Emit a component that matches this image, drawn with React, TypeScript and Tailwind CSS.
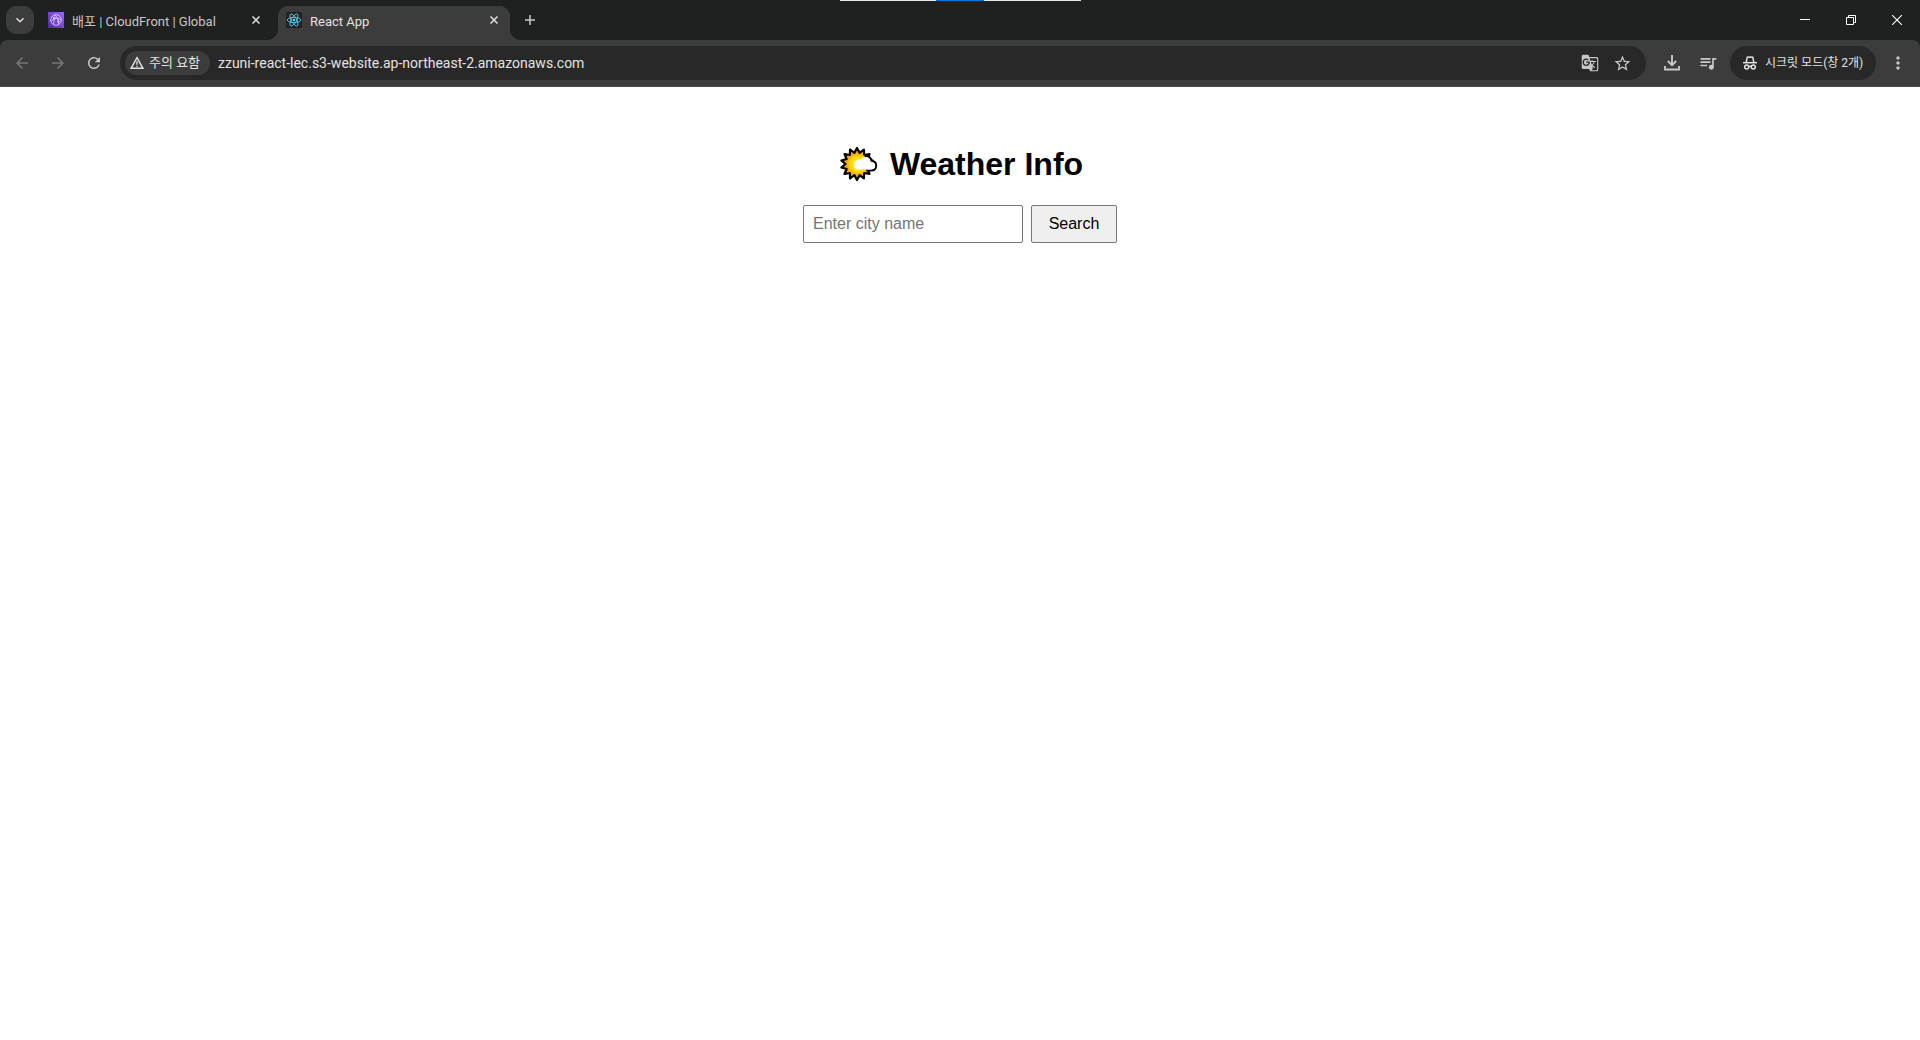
import React from 'react';
import {
  MdArrowBack,
  MdArrowForward,
  MdExpandMore,
  MdGTranslate,
  MdMoreVert,
  MdQueueMusic,
  MdRefresh,
  MdStarBorder,
} from 'react-icons/md';

const UI_FONT = "font-[Roboto,'Noto_Sans_CJK_KR',sans-serif]";

const CloudFrontIcon = () => (
  <svg viewBox="0 0 16 16" className="size-4 shrink-0" aria-hidden="true">
    <defs>
      <linearGradient id="cloudfront" x1="0" y1="1" x2="1" y2="0">
        <stop offset="0" stopColor="#4d27aa" />
        <stop offset="1" stopColor="#a166ff" />
      </linearGradient>
    </defs>
    <rect width="16" height="16" fill="url(#cloudfront)" />
    <g fill="none" stroke="#e6dcfa" strokeWidth="0.8">
      <circle cx="8" cy="8" r="5.300" />
      <path d="M4 4.500C6 5 6.500 8 5.500 12.500M6.500 3C9.500 4.500 11 8 10.500 12.800M3 9.500C6 6 10 5.500 13 8" />
      <circle cx="6.500" cy="6" r="0.800" />
      <circle cx="10.300" cy="9.500" r="0.800" />
    </g>
  </svg>
);

const ReactIcon = () => (
  <svg viewBox="0 0 16 16" className="size-4 shrink-0" aria-hidden="true">
    <rect width="16" height="16" rx="1.500" fill="#222222" />
    <g fill="none" stroke="#61dafb" strokeWidth="0.8">
      <ellipse cx="8" cy="8" rx="6.800" ry="2.600" />
      <ellipse cx="8" cy="8" rx="6.800" ry="2.600" transform="rotate(60 8 8)" />
      <ellipse cx="8" cy="8" rx="6.800" ry="2.600" transform="rotate(120 8 8)" />
    </g>
    <circle cx="8" cy="8" r="1.300" fill="#61dafb" />
  </svg>
);

const CloseIcon = () => (
  <svg viewBox="0 0 8 8" className="size-2" stroke="currentColor" strokeWidth="1.500" aria-hidden="true">
    <path d="M0.500 0.500L7.500 7.500M7.500 0.500L0.500 7.500" />
  </svg>
);

const WarningIcon = () => (
  <svg viewBox="0 0 14 14" className="size-3.5 shrink-0" aria-hidden="true">
    <path d="M7 1.700L12.900 12.300H1.100Z" fill="none" stroke="#e3e3e3" strokeWidth="1.400" />
    <path d="M7 5.200V8.800M7 9.700V11" stroke="#e3e3e3" strokeWidth="1.300" />
  </svg>
);

const DownloadIcon = () => (
  <svg viewBox="0 0 16 16" className="size-4" fill="none" stroke="#c7c7c7" strokeWidth="1.900" aria-hidden="true">
    <path d="M8 0V10M3.800 6L8 10.200L12.200 6M1 11V14.500H15V11" />
  </svg>
);

const IncognitoIcon = () => (
  <svg viewBox="0 0 14 14" className="size-3.5 shrink-0" aria-hidden="true">
    <g fill="none" stroke="#e3e3e3" strokeWidth="1.500">
      <path d="M3.200 6.300L4.200 1.200Q5.500 0.700 7 1.300Q8.500 0.700 9.800 1.200L10.800 6.300" />
      <path d="M0 6.700H14" />
      <circle cx="3.700" cy="11" r="2" />
      <circle cx="10.300" cy="11" r="2" />
      <path d="M5.700 10.700Q7 9.900 8.300 10.700" />
    </g>
  </svg>
);

const SunIcon = () => {
  const points = Array.from({ length: 28 }, (_, i) => {
    const angle = (i * Math.PI) / 14 + Math.PI / 14;
    const r = i % 2 === 0 ? 16 : 11.5;
    return `${17 + r * Math.cos(angle)},${18 + r * Math.sin(angle)}`;
  }).join(' ');

  return (
    <svg viewBox="0 0 38 36" className="h-9 w-[38px]" aria-hidden="true">
      <defs>
        <radialGradient id="sun" gradientUnits="userSpaceOnUse" cx="18" cy="18" r="12.500">
          <stop offset="0.4" stopColor="#ffe817" />
          <stop offset="0.65" stopColor="#ffd20a" />
          <stop offset="0.9" stopColor="#f9a800" />
        </radialGradient>
      </defs>
      <polygon points={points} fill="url(#sun)" stroke="#000" strokeWidth="2.200" strokeLinejoin="round" />
      <path
        d="M23 9.800C28 8.800 31 11.500 31.800 14.500C34.500 15 36.300 17 36.300 19.600C36.300 22.500 34.300 24.600 31 24.600H27V12Z"
        fill="#fff"
      />
      <path
        d="M24.500 10C28.500 9.500 31 12 31.500 14.800C34.500 15.200 36.200 17.200 36.200 19.600C36.200 22.500 34.300 24.600 31 24.600H26.500"
        fill="none"
        stroke="#000"
        strokeWidth="2"
      />
      <path
        d="M18.500 23.500A4.700 4.700 0 0 1 17.500 14.200A4 4 0 0 1 21 13.300A5 5 0 0 1 25.500 11.200C28 11.200 30 13 30.400 15.800C33.500 16 35.100 17.600 35.100 19.600C35.100 21.800 33.500 23.500 31 23.500Z"
        fill="#fff"
      />
    </svg>
  );
};

const TabStrip = () => (
  <div className="flex h-10 items-end bg-[#1f2120] text-[#e3e3e3]">
    <button
      aria-label="Search tabs"
      className="mb-1.5 ml-1.5 flex size-7 items-center justify-center rounded-[10px] bg-[#3c3c3c]"
    >
      <MdExpandMore size={16} />
    </button>
    <div className="ml-3.5 flex h-[34px] w-[219px] items-center pb-1.5 pr-[3px]">
      <CloudFrontIcon />
      <span className="ml-2 grow truncate pt-1 text-[13px] leading-4 text-[#c7c7c7]">배포 | CloudFront | Global</span>
      <button aria-label="Close tab" className="flex size-4 items-center justify-center">
        <CloseIcon />
      </button>
    </div>
    <svg viewBox="0 0 11 11" className="size-[11px]" aria-hidden="true">
      <path d="M11 0V11H0A11 11 0 0 0 11 0Z" fill="#3c3c3c" />
    </svg>
    <div className="flex h-[34px] w-[232px] items-center rounded-t-[10px] bg-[#3c3c3c] pb-1.5 pl-2 pr-2">
      <ReactIcon />
      <span className="ml-2 grow truncate pt-1 text-[13px] leading-4">React App</span>
      <button aria-label="Close tab" className="flex size-4 items-center justify-center">
        <CloseIcon />
      </button>
    </div>
    <svg viewBox="0 0 11 11" className="size-[11px]" aria-hidden="true">
      <path d="M0 0V11H11A11 11 0 0 1 0 0Z" fill="#3c3c3c" />
    </svg>
    <button aria-label="New tab" className="mb-3 ml-px flex size-4 items-center justify-center">
      <svg viewBox="0 0 12 12" className="size-3" stroke="#c7c7c7" strokeWidth="1.500" aria-hidden="true">
        <path d="M6 1V11M1 6H11" />
      </svg>
    </button>
    <div className="ml-auto flex h-full text-white">
      <button aria-label="Minimize" className="flex w-[46px] items-center justify-center">
        <svg viewBox="0 0 10 10" className="size-2.5" aria-hidden="true">
          <path d="M0 4.500H10" stroke="currentColor" />
        </svg>
      </button>
      <button aria-label="Restore" className="flex w-[46px] items-center justify-center">
        <svg viewBox="0 0 10 10" className="size-2.5" fill="none" stroke="currentColor" aria-hidden="true">
          <path d="M0.500 2.500H7.500V9.500H0.500ZM2.500 2.500V0.500H9.500V7.500H7.500" />
        </svg>
      </button>
      <button aria-label="Close" className="flex w-[46px] items-center justify-center">
        <svg viewBox="0 0 10 10" className="size-2.5" stroke="currentColor" strokeWidth="1.100" aria-hidden="true">
          <path d="M0 0L10 10M10 0L0 10" />
        </svg>
      </button>
    </div>
  </div>
);

const Toolbar = () => (
  <div className="bg-[#1f2120]">
    <div className="flex h-[47px] items-center rounded-t-lg border-b border-[#4a4a4a] bg-[#3c3c3c] text-[#c7c7c7]">
      <div className="flex w-[120px] gap-4 pl-3">
        <button aria-label="Back" className="flex size-5 items-center justify-center text-[#777777]">
          <MdArrowBack size={18} />
        </button>
        <button aria-label="Forward" className="flex size-5 items-center justify-center text-[#777777]">
          <MdArrowForward size={18} />
        </button>
        <button aria-label="Reload" className="flex size-5 items-center justify-center">
          <MdRefresh size={18} />
        </button>
      </div>

      {/* Address bar */}
      <div className="flex h-[34px] grow items-center rounded-full bg-[#282828] pl-[5px] pr-3.5">
        <button className="flex h-6 w-[85px] shrink-0 items-center gap-[5px] rounded-full bg-[#3c3c3c] pl-[5px] text-[13px] text-[#e3e3e3]">
          <WarningIcon />
          주의 요함
        </button>
        <input
          type="text"
          aria-label="Address"
          defaultValue="zzuni-react-lec.s3-website.ap-northeast-2.amazonaws.com"
          className="ml-2 min-w-0 grow bg-transparent text-sm text-[#e3e3e3] outline-none"
        />
        <div className="flex gap-3">
          <button aria-label="Translate" className="flex size-5 items-center justify-center">
            <MdGTranslate size={18} />
          </button>
          <button aria-label="Bookmark" className="flex size-5 items-center justify-center">
            <MdStarBorder size={19} />
          </button>
        </div>
      </div>

      <button aria-label="Downloads" className="ml-4 flex size-5 items-center justify-center">
        <DownloadIcon />
      </button>
      <button aria-label="Media" className="ml-4 flex size-5 items-center justify-center">
        <MdQueueMusic size={20} />
      </button>
      <button className="ml-3 flex h-[34px] w-[146px] items-center gap-2 rounded-full bg-[#282828] pl-[13px] text-xs text-[#e3e3e3]">
        <IncognitoIcon />
        시크릿 모드(창 2개)
      </button>
      <button aria-label="Menu" className="mx-3 flex size-5 items-center justify-center">
        <MdMoreVert size={20} />
      </button>
    </div>
  </div>
);

const Weather = () => (
  <main className="flex flex-col items-center pt-[58px] font-['Liberation_Sans',sans-serif] text-black">
    <h1 className="flex items-center gap-3 pl-[3px] text-[32px] leading-[38px] font-bold">
      <SunIcon />
      Weather Info
    </h1>
    <form className="mt-[22px] flex gap-2" onSubmit={(e) => e.preventDefault()}>
      <input
        type="text"
        aria-label="City name"
        placeholder="Enter city name"
        className="h-[38px] w-[220px] rounded-[2px] border border-[#767676] bg-white px-[9px] text-base placeholder:text-[#757575]"
      />
      <button type="submit" className="h-[38px] w-[86px] rounded-[2px] border border-[#767676] bg-[#efefef] text-base">
        Search
      </button>
    </form>
  </main>
);

const App = () => {
  return (
    <div className="relative min-h-screen bg-white">
      <header className={UI_FONT}>
        <TabStrip />
        <Toolbar />
      </header>
      {/* Drag handle on the top edge of the window */}
      <div className="absolute inset-x-0 top-0 flex justify-center">
        <div className="flex h-px w-[241px] justify-center bg-[#e3e8e3]">
          <div className="w-12 bg-[#0078d4]" />
        </div>
      </div>
      <Weather />
    </div>
  );
};

export default App;
